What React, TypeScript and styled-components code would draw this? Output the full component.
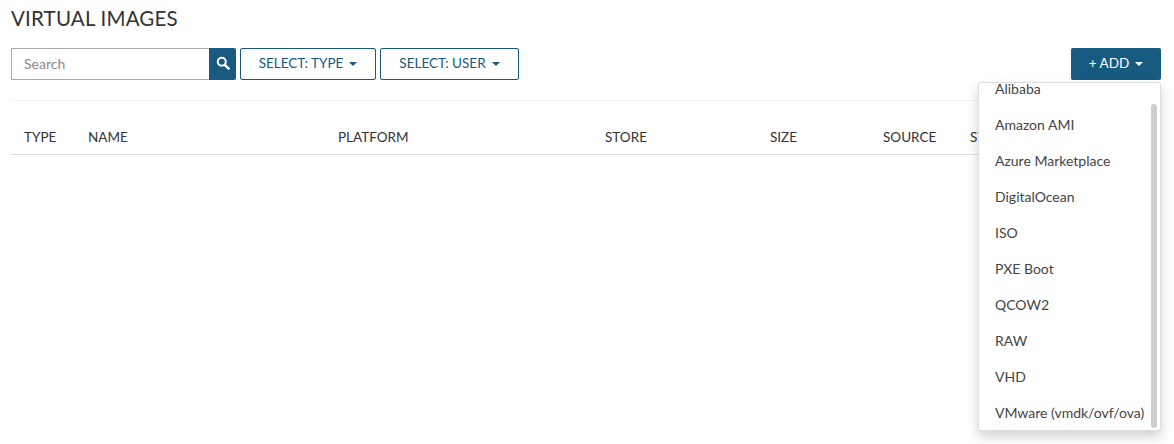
import {createGlobalStyle, styled} from 'styled-components';

const GlobalStyle = createGlobalStyle`
    html, body {
        margin: 0;
        background: #fff;
    }
    body {
        font-family: 'Lato', 'Noto Sans', sans-serif;
        color: #333;
    }
`

const Page = styled.div`
    width: 1174px;
    height: 444px;
    box-sizing: border-box;
    padding: 0 13px 0 11px;
    overflow: hidden;
`

const Title = styled.h1`
    margin: 0;
    height: 48px;
    padding-top: 6px;
    box-sizing: border-box;
    font-size: 20.5px;
    line-height: 24px;
    font-weight: 400;
    letter-spacing: 0.2px;
    color: #333;
`

const Toolbar = styled.div`
    display: flex;
    align-items: flex-start;
    gap: 4px;
    height: 53px;
    box-sizing: border-box;
    border-bottom: 1px solid #f1f1f1;
`

const SearchBox = styled.div`
    display: flex;
    height: 32px;
`

const SearchInput = styled.input`
    width: 198px;
    height: 32px;
    box-sizing: border-box;
    padding: 0 12px 2px;
    border: 1px solid #aaa;
    border-right: 0;
    outline: none;
    font-family: inherit;
    font-size: 14px;
    color: #333;

    &::placeholder {
        color: #8a8a8a;
        opacity: 1;
    }
`

const SearchButton = styled.button`
    display: flex;
    align-items: center;
    justify-content: center;
    width: 27px;
    height: 32px;
    padding: 0 0 3px;
    border: 0;
    border-radius: 0 2px 2px 0;
    background: #175a7f;
    color: #fff;
`

const Caret = styled.span`
    display: inline-block;
    margin-left: 6px;
    vertical-align: 2px;
    border-top: 4px solid currentColor;
    border-left: 4px solid transparent;
    border-right: 4px solid transparent;
`

const SelectButton = styled.button<{$width: number}>`
    width: ${({$width}) => $width}px;
    height: 32px;
    padding: 0 0 2px;
    border: 1px solid #175a7f;
    border-radius: 2px;
    background: #fff;
    color: #175a7f;
    font-family: inherit;
    font-size: 13.5px;
    white-space: nowrap;
`

const AddWrap = styled.div`
    position: relative;
    margin-left: auto;
`

const AddButton = styled.button`
    width: 90px;
    height: 32px;
    padding: 0 0 2px;
    border: 0;
    border-radius: 2px;
    background: #175a7f;
    color: #fff;
    font-family: inherit;
    font-size: 13.5px;
`

const Menu = styled.div`
    position: absolute;
    z-index: 2;
    top: 34px;
    right: 0;
    width: 183px;
    height: 349px;
    box-sizing: border-box;
    overflow: hidden;
    border: 1px solid #ddd;
    border-radius: 3px;
    background: #fff;
    box-shadow: 0 6px 12px rgba(0, 0, 0, 0.175);
`

const MenuList = styled.ul`
    margin: -12px 0 0;
    padding: 0;
    list-style: none;
`

const MenuItem = styled.li`
    height: 36px;
    padding-left: 16px;
    font-size: 14px;
    line-height: 36px;
    color: #444;
    white-space: nowrap;
`

const ScrollThumb = styled.div`
    position: absolute;
    top: 21px;
    right: 3px;
    width: 6px;
    height: 324px;
    border-radius: 3px;
    background: #cdcdcd;
`

const TableHead = styled.div`
    display: grid;
    grid-template-columns: 64px 250px 267px 165px 113px 87px 1fr;
    height: 54px;
    box-sizing: border-box;
    padding: 20px 0 0 13px;
    border-bottom: 1px solid #ddd;
`

const HeadCell = styled.div`
    font-size: 13.5px;
    line-height: 33px;
    color: #333;
`

const menuItems = [
    'Alibaba',
    'Amazon AMI',
    'Azure Marketplace',
    'DigitalOcean',
    'ISO',
    'PXE Boot',
    'QCOW2',
    'RAW',
    'VHD',
    'VMware (vmdk/ovf/ova)',
];

const columns = ['TYPE', 'NAME', 'PLATFORM', 'STORE', 'SIZE', 'SOURCE', 'STATUS'];

export default function App() {
    return (
        <Page>
            <GlobalStyle />
            <Title>VIRTUAL IMAGES</Title>
            <Toolbar>
                <SearchBox>
                    <SearchInput placeholder="Search" />
                    <SearchButton aria-label="Search">
                        <svg width="14" height="14" viewBox="0 0 14 14" fill="none" stroke="currentColor">
                            <circle cx="5.8" cy="5.8" r="4" strokeWidth="2" />
                            <path d="M8.8 8.8L12.6 12.6" strokeWidth="2.6" strokeLinecap="round" />
                        </svg>
                    </SearchButton>
                </SearchBox>
                <SelectButton $width={136}>SELECT: TYPE<Caret /></SelectButton>
                <SelectButton $width={139}>SELECT: USER<Caret /></SelectButton>
                <AddWrap>
                    <AddButton>+ ADD<Caret /></AddButton>
                    <Menu>
                        <MenuList>
                            {menuItems.map((item) => <MenuItem key={item}>{item}</MenuItem>)}
                        </MenuList>
                        <ScrollThumb />
                    </Menu>
                </AddWrap>
            </Toolbar>
            <TableHead>
                {columns.map((column) => <HeadCell key={column}>{column}</HeadCell>)}
            </TableHead>
        </Page>
    )
}
